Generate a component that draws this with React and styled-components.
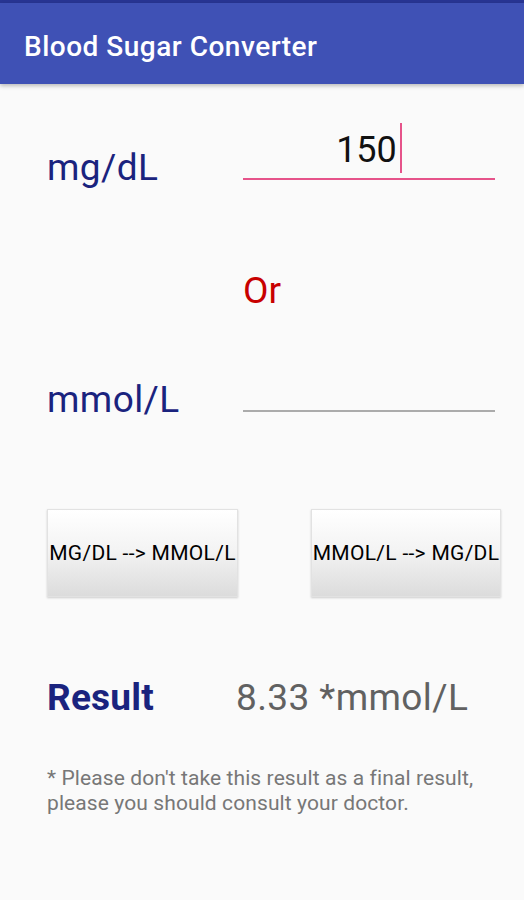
import React from 'react';
import styled, { createGlobalStyle } from 'styled-components';

const GlobalStyle = createGlobalStyle`
  html, body {
    margin: 0;
    padding: 0;
    background: #fafafa;
    font-family: Roboto, "Noto Sans", "Liberation Sans", sans-serif;
  }
`;

const StatusBar = styled.div`
  height: 3px;
  background: #283593;
`;

const AppBar = styled.header`
  height: 81px;
  background: #3f51b5;
  display: flex;
  align-items: center;
  padding: 5px 0 0 24px;
  box-sizing: border-box;
  box-shadow: 0 2px 4px rgba(0, 0, 0, 0.25);
  position: relative;
`;

const Title = styled.h1`
  margin: 0;
  color: #fff;
  font-size: 28px;
  font-weight: 500;
  letter-spacing: 0.5px;
`;

const Main = styled.main`
  padding: 0 29px 0 47px;
`;

const FieldRow = styled.div`
  display: grid;
  grid-template-columns: 196px 1fr;
  align-items: end;
  margin-top: ${p => p.$top}px;
`;

const Label = styled.div`
  font-size: 37px;
  line-height: 24px;
  letter-spacing: 0.4px;
  color: #1a237e;
`;

const Field = styled.div`
  height: 60px;
  box-sizing: border-box;
  display: flex;
  align-items: flex-end;
  justify-content: center;
  padding-bottom: 5px;
  border-bottom: 2px solid ${p => (p.$active ? '#e6538a' : '#ababab')};
`;

const Value = styled.span`
  font-size: 36px;
  line-height: 36px;
  color: #111;
  margin-bottom: 5px;
`;

const Caret = styled.span`
  width: 2px;
  height: 50px;
  margin-left: 3px;
  background: #e6538a;
`;

const Or = styled.div`
  margin: 92px 0 0 196px;
  font-size: 37px;
  line-height: 37px;
  color: #c80000;
`;

const ButtonRow = styled.div`
  display: flex;
  gap: 73px;
  margin-top: 97px;
`;

const ConvertButton = styled.button`
  flex: none;
  width: ${p => p.$width}px;
  height: 88px;
  padding: 0;
  display: flex;
  align-items: center;
  justify-content: center;
  overflow: hidden;
  white-space: nowrap;
  font-family: Roboto, "Liberation Sans", sans-serif;
  font-size: 21px;
  letter-spacing: 0.3px;
  color: #000;
  background: linear-gradient(#ffffff 0%, #f4f4f4 45%, #dcdcdc 100%);
  border: 1px solid #e2e2e2;
  border-radius: 0;
  box-shadow: 0 1px 2px rgba(0, 0, 0, 0.18);
`;

const ResultRow = styled.div`
  display: grid;
  grid-template-columns: 189px 1fr;
  align-items: end;
  margin-top: 89px;
`;

const ResultLabel = styled.div`
  font-size: 37px;
  line-height: 24px;
  font-weight: 700;
  letter-spacing: 0.2px;
  color: #1a237e;
`;

const ResultValue = styled.div`
  font-size: 37px;
  line-height: 24px;
  letter-spacing: 0.4px;
  color: #616161;
`;

const Note = styled.p`
  margin: 56px 0 0;
  font-size: 21px;
  line-height: 25px;
  letter-spacing: 0.1px;
  color: #777;
`;

export default function App() {
  return (
    <>
      <GlobalStyle />
      <StatusBar />
      <AppBar>
        <Title>Blood Sugar Converter</Title>
      </AppBar>
      <Main>
        <FieldRow $top={36}>
          <Label>mg/dL</Label>
          <Field $active>
            <Value>150</Value>
            <Caret />
          </Field>
        </FieldRow>
        <Or>Or</Or>
        <FieldRow $top={43}>
          <Label>mmol/L</Label>
          <Field />
        </FieldRow>
        <ButtonRow>
          <ConvertButton $width={191}>MG/DL --&gt; MMOL/L</ConvertButton>
          <ConvertButton $width={190}>MMOL/L --&gt; MG/DL</ConvertButton>
        </ButtonRow>
        <ResultRow>
          <ResultLabel>Result</ResultLabel>
          <ResultValue>8.33 *mmol/L</ResultValue>
        </ResultRow>
        <Note>
          * Please don't take this result as a final result, please you should consult your doctor.
        </Note>
      </Main>
    </>
  );
}
